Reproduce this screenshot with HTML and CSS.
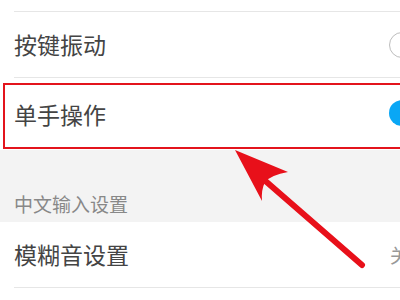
FILE: index.html
```html
<!DOCTYPE html>
<html lang="zh">
<head>
<meta charset="utf-8">
<link rel="stylesheet" href="styles.css">
</head>
<body>
<div class="page">
  <div class="top"></div>
  <div class="row">
    <span class="label">按键振动</span>
    <span class="toggle off"></span>
  </div>
  <div class="divider"></div>
  <div class="row row-tall">
    <span class="label">单手操作</span>
    <span class="toggle on"></span>
  </div>
  <div class="section">中文输入设置</div>
  <div class="row">
    <span class="label">模糊音设置</span>
    <span class="value">关</span>
  </div>
  <div class="divider"></div>

  <div class="highlight"></div>
  <svg class="arrow" width="400" height="300" viewBox="0 0 400 300">
    <line x1="362" y1="265" x2="262" y2="178" stroke="#e8101a" stroke-width="6" stroke-linecap="round"/>
    <path d="M235,150 L288,172 Q271,175 265,182 Q261,190 262,201 Z" fill="#e8101a"/>
  </svg>
</div>
</body>
</html>
```
FILE: styles.css
```css
html, body {
  margin: 0;
  padding: 0;
  overflow: hidden;
  background: #fff;
}
.page {
  position: relative;
  width: 400px;
  height: 300px;
  overflow: hidden;
  font-family: "Noto Sans CJK SC", "Noto Sans", sans-serif;
}
.top {
  height: 11px;
  border-bottom: 1px solid #e6e6e6;
  margin-left: 14px;
}
.row {
  display: flex;
  align-items: center;
  justify-content: space-between;
  height: 65px;
  padding-left: 14px;
}
.row-tall {
  height: 72px;
}
.label {
  font-size: 23px;
  color: #444;
  line-height: 1;
}
.divider {
  height: 1px;
  background: #e6e6e6;
  margin-left: 14px;
}
.toggle {
  width: 26px;
  height: 26px;
  border-radius: 50%;
  box-sizing: border-box;
  margin-right: -15px;
}
.toggle.off {
  border: 1px solid #bdbdbd;
  background: #fff;
}
.toggle.on {
  background: #0aa7f5;
  margin-top: -2px;
}
.value {
  font-size: 19px;
  color: #999;
  margin-right: -9px;
}
.section {
  height: 72px;
  box-sizing: border-box;
  background: #f3f3f3;
  padding-left: 14px;
  padding-top: 42px;
  font-size: 19px;
  line-height: 24px;
  color: #888;
}
.highlight {
  position: absolute;
  left: 3px;
  top: 83px;
  width: 420px;
  height: 66px;
  box-sizing: border-box;
  border: 2px solid #e3141c;
}
.arrow {
  position: absolute;
  left: 0;
  top: 0;
}
```
